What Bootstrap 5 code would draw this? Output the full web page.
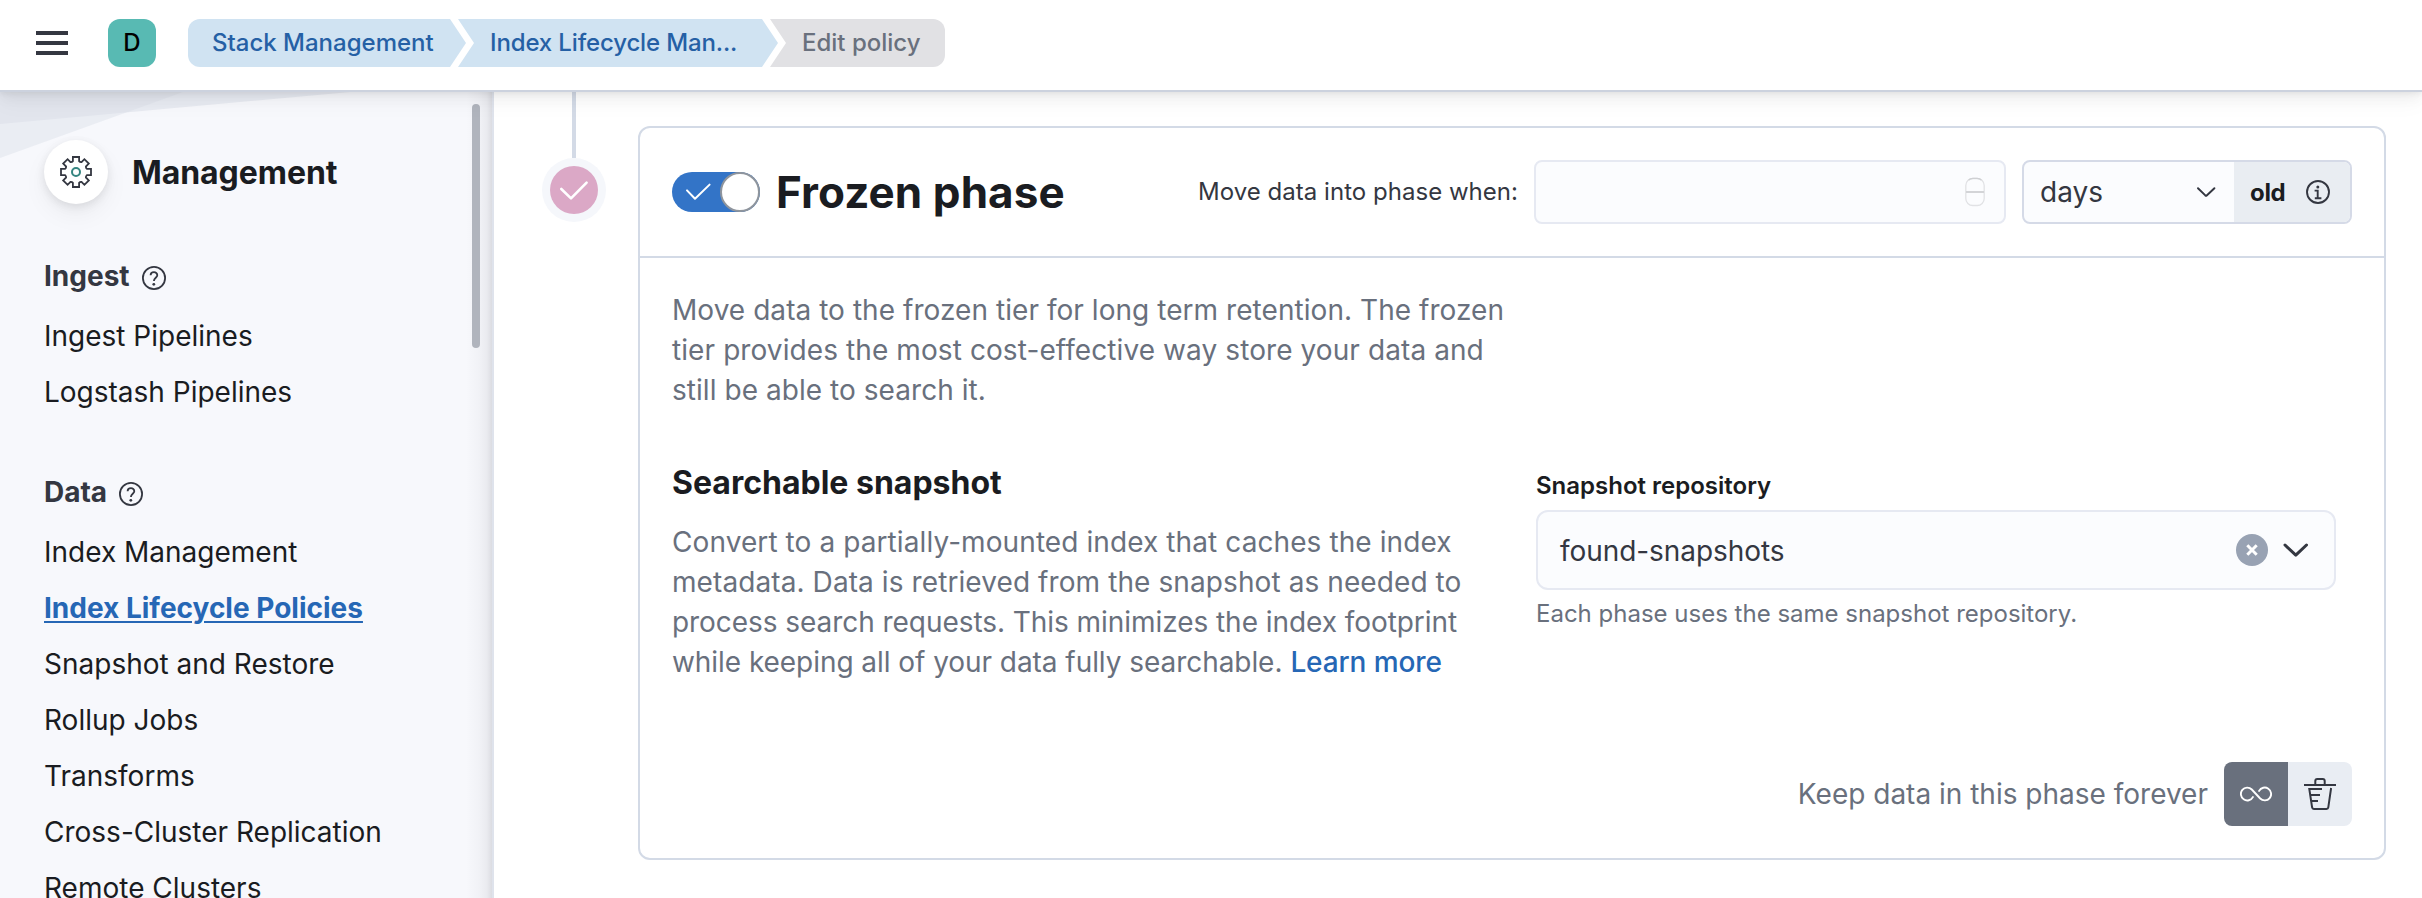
<!DOCTYPE html>
<html lang="en">
<head>
<meta charset="utf-8">
<title>Edit policy</title>
<link href="https://cdn.jsdelivr.net/npm/bootstrap@5.3.0/dist/css/bootstrap.min.css" rel="stylesheet">
<script src="https://cdn.jsdelivr.net/npm/bootstrap@5.3.0/dist/js/bootstrap.bundle.min.js"></script>
<style>
  :root { --ink: #1a1c21; --text: #343741; --subdued: #69707d; --line: #d3dae6; --link: #2667b5; --field: #fbfcfe; }
  html, body { height: 100%; }
  body { font-family: Inter, "Liberation Sans", sans-serif; font-size: 28px; line-height: 40px; color: var(--text); background: #fff; overflow: hidden; }
  svg { display: block; flex: none; }
  .raised { box-shadow: 0 1.8px 8px rgba(0,0,0,.05), 0 11px 24px rgba(0,0,0,.05), 0 4px 12px rgba(0,0,0,.05); }

  .topbar { height: 92px; padding: 0 0 4px 36px; border-bottom: 2px solid #ccd2de; z-index: 3; box-shadow: 0 2px 5px rgba(0,0,0,.05), 0 5px 14px rgba(0,0,0,.05), 0 11px 22px rgba(0,0,0,.035); }
  .space-avatar { width: 48px; height: 48px; margin: 0 32px 0 40px; border-radius: 12px; background: #58bab3; color: #000; font-size: 24px; font-weight: 500; }
  .crumb { height: 48px; padding-left: 24px; font-size: 24px; font-weight: 500; line-height: 47px; color: #2560a5; background: #d0e3f2; white-space: nowrap; text-decoration: none; }
  .crumb + .crumb { margin-left: -8px; padding-left: 32px; }
  .crumb-first { width: 278px; border-radius: 12px 0 0 12px; clip-path: polygon(0 0, 262px 0, 100% 50%, 262px 100%, 0 100%); }
  .crumb-mid { width: 320px; letter-spacing: -.14px; clip-path: polygon(0 0, 304px 0, 100% 50%, 304px 100%, 0 100%, 16px 50%); }
  .crumb-last { width: 175px; border-radius: 0 12px 12px 0; color: #69707d; background: #e1e1e4; clip-path: polygon(0 0, 100% 0, 100% 100%, 0 100%, 16px 50%); }

  .sidebar { width: 492px; background: #f7f8fc; }
  .sidebar-art { top: 0; left: 0; }
  .sidebar-shade { top: 0; right: 0; bottom: 0; width: 26px; background: linear-gradient(90deg, rgba(60,60,75,0), rgba(60,60,75,.03) 50%, rgba(60,60,75,.07) 80%, rgba(60,60,75,.15)); }
  .scroll-thumb { top: 12px; right: 12px; width: 8px; height: 244px; border-radius: 4px; background: #b0b4bd; }
  .sidebar-body { padding: 48px 0 0 44px; }
  .app-icon { width: 64px; height: 64px; background: #fff; }
  .sidebar-title { padding-top: 2px; font-size: 32px; font-weight: 700; color: var(--ink); letter-spacing: -.07px; }
  .nav-group { margin-top: 52px; }
  .nav-group h2 { margin: 0 0 12px; font-size: 28px; line-height: 40px; font-weight: 700; color: var(--text); gap: 12px; }
  .nav-group h2 svg { margin-top: 4px; }
  .nav-group .nav-link { padding: 0; line-height: 56px; height: 56px; color: var(--ink); white-space: nowrap; }
  .nav-group .nav-link.active { font-weight: 700; color: var(--link); text-decoration: underline; text-decoration-thickness: 2px; text-underline-offset: 3px; }

  .content-area { border-left: 2px solid #dfe3ec; background: #fff; padding-left: 48px; }
  .timeline { width: 64px; margin-right: 32px; }
  .timeline-line { width: 4px; height: 66px; background: var(--line); }
  .timeline-ring { width: 64px; height: 64px; background: #f5f7fb; }
  .timeline-dot { width: 48px; height: 48px; background: #dba8c6; }

  .phase { width: 1748px; height: 734px; margin-top: 34px; border: 2px solid var(--line); border-radius: 12px; }
  .phase-head { height: 130px; padding: 0 32px; border-bottom: 2px solid var(--line); }
  .switch { width: 88px; height: 40px; border-radius: 20px; background: #3374c7; padding-left: 12px; }
  .switch-thumb { width: 40px; height: 40px; border: 2px solid #8f959d; background: #fff; }
  .phase-title { font-size: 44px; line-height: 48px; font-weight: 700; color: var(--ink); margin: 0 0 0 16px; letter-spacing: .08px; }
  .age-label { font-size: 24px; margin-right: 16px; padding-bottom: 1px; letter-spacing: .03px; }
  .field { border: 2px solid #e6e9f2; background: var(--field); }
  .age-input { width: 472px; height: 64px; border-radius: 8px; padding-right: 19px; margin-right: 16px; }
  .age-unit { width: 330px; height: 64px; border: 2px solid #d5dae7; border-radius: 8px; background: var(--field); }
  .age-unit-value { padding: 0 18px 0 16px; }
  .age-append { width: 116px; background: #e9edf2; padding: 0 20px 0 16px; }
  .age-append b { font-size: 24px; color: var(--ink); padding-top: 2px; letter-spacing: -.3px; }
  .phase-body { padding: 32px; color: var(--subdued); }
  .prose { width: 848px; margin: 0; letter-spacing: .09px; }
  .prose .snug { letter-spacing: .05px; }
  .prose .tight { letter-spacing: -.055px; }
  .prose a { color: var(--link); font-weight: 500; text-decoration: none; letter-spacing: -.1px; }
  .settings { margin-top: 49px; }
  .section-title { font-size: 32px; line-height: 48px; font-weight: 700; color: var(--ink); margin: 0 0 15px; }
  .repo { width: 800px; margin: 9px 16px 0 0; font-size: 24px; }
  .repo label { line-height: 36px; font-weight: 600; color: var(--ink); }
  .combo { height: 80px; margin-top: 6px; padding: 0 23px 0 22px; border-radius: 12px; font-size: 28px; letter-spacing: -.06px; color: var(--text); }
  .combo-value { padding-top: 1px; }
  .combo-arrow { margin-left: 15px; }
  .help { line-height: 36px; margin-top: 6px; color: var(--subdued); }
  .btn-seg { width: 64px; height: 64px; background: #e9edf3; }
  .btn-seg.selected { background: #69707d; }
</style>
</head>
<body class="d-flex flex-column">

<header class="topbar d-flex align-items-center bg-white position-relative flex-shrink-0">
  <svg width="32" height="24" fill="#343741" aria-label="Menu"><path d="M0 0h32v4H0zM0 10h32v4H0zM0 20h32v4H0z"/></svg>
  <div class="space-avatar d-flex align-items-center justify-content-center">D</div>
  <nav class="d-flex" aria-label="Breadcrumb">
    <a class="crumb crumb-first" style="color:#2560a5" href="#">Stack Management</a>
    <a class="crumb crumb-mid" style="color:#2560a5" href="#">Index Lifecycle Man...</a>
    <span class="crumb crumb-last">Edit policy</span>
  </nav>
</header>

<div class="d-flex flex-grow-1 overflow-hidden">
  <aside class="sidebar position-relative flex-shrink-0 overflow-hidden">
    <svg class="sidebar-art position-absolute" width="492" height="80">
      <path d="M0 0H350L0 32Z" fill="#d9dde8" fill-opacity=".5"/>
      <path d="M0 0H183L0 66Z" fill="#d9dde8" fill-opacity=".42"/>
    </svg>
    <div class="sidebar-shade position-absolute"></div>
    <div class="scroll-thumb position-absolute"></div>

    <div class="sidebar-body position-relative">
      <div class="d-flex align-items-center">
        <div class="app-icon raised rounded-circle d-flex align-items-center justify-content-center">
          <svg width="32" height="32" viewBox="-16 -16 32 32" fill="none" stroke="#343741" stroke-width="1.8">
            <path d="M-3.1-10.9V-15H3.1V-10.9Q4-9.7 5.5-9.9L8.4-12.8 12.8-8.4 9.9-5.5Q9.7-4 10.9-3.1H15V3.1H10.9Q9.7 4 9.9 5.5L12.8 8.4 8.4 12.8 5.5 9.9Q4 9.7 3.1 10.9V15H-3.1V10.9Q-4 9.7-5.5 9.9L-8.4 12.8-12.8 8.4-9.9 5.5Q-9.7 4-10.9 3.1H-15V-3.1H-10.9Q-9.7-4-9.9-5.5L-12.8-8.4-8.4-12.8-5.5-9.9Q-4-9.7-3.1-10.9Z"/>
            <circle r="4" stroke="#358581" stroke-width="2"/>
          </svg>
        </div>
        <div class="sidebar-title ms-4">Management</div>
      </div>

      <section class="nav-group">
        <h2 class="d-flex align-items-center">Ingest
          <svg width="24" height="24" fill="none" stroke="#343741" stroke-width="1.8"><circle cx="12" cy="12" r="11.1"/><path d="M8.6 9.3C8.6 5.2 15.3 5.2 15.3 9.2 15.3 11.7 11.9 11.9 11.9 15"/><circle cx="11.8" cy="18.3" r="1.4" fill="#343741" stroke="none"/></svg>
        </h2>
        <nav class="nav flex-column">
          <a class="nav-link" href="#">Ingest Pipelines</a>
          <a class="nav-link" href="#">Logstash Pipelines</a>
        </nav>
      </section>

      <section class="nav-group">
        <h2 class="d-flex align-items-center">Data
          <svg width="24" height="24" fill="none" stroke="#343741" stroke-width="1.8"><circle cx="12" cy="12" r="11.1"/><path d="M8.6 9.3C8.6 5.2 15.3 5.2 15.3 9.2 15.3 11.7 11.9 11.9 11.9 15"/><circle cx="11.8" cy="18.3" r="1.4" fill="#343741" stroke="none"/></svg>
        </h2>
        <nav class="nav flex-column">
          <a class="nav-link" href="#">Index Management</a>
          <a class="nav-link active" href="#">Index Lifecycle Policies</a>
          <a class="nav-link" href="#">Snapshot and Restore</a>
          <a class="nav-link" href="#">Rollup Jobs</a>
          <a class="nav-link" href="#">Transforms</a>
          <a class="nav-link" href="#">Cross-Cluster Replication</a>
          <a class="nav-link" href="#">Remote Clusters</a>
        </nav>
      </section>
    </div>
  </aside>

  <main class="content-area d-flex flex-grow-1 align-items-start">
    <div class="timeline d-flex flex-column align-items-center flex-shrink-0">
      <div class="timeline-line"></div>
      <div class="timeline-ring rounded-circle d-flex align-items-center justify-content-center">
        <div class="timeline-dot rounded-circle d-flex align-items-center justify-content-center">
          <svg width="32" height="32" fill="none" stroke="#fff" stroke-width="2.6" stroke-linecap="round" stroke-linejoin="round"><path d="M3.3 15L13 24.4 28.6 8.6"/></svg>
        </div>
      </div>
    </div>

    <section class="phase flex-shrink-0 d-flex flex-column">
      <div class="phase-head d-flex align-items-center flex-shrink-0">
        <div class="switch d-flex align-items-center justify-content-between" role="switch" aria-checked="true">
          <svg width="28" height="24" fill="none" stroke="#fff" stroke-width="2" stroke-linecap="round" stroke-linejoin="round"><path d="M3 10.400L11 18.800 25.600 4.600"/></svg>
          <div class="switch-thumb rounded-circle"></div>
        </div>
        <h1 class="phase-title">Frozen phase</h1>
        <div class="d-flex align-items-center ms-auto">
          <span class="age-label">Move data into phase when:</span>
          <div class="age-input field d-flex align-items-center justify-content-end">
            <svg width="20" height="30" fill="none"><rect x="0.8" y="1.5" width="18.4" height="27" rx="7" stroke="#e1e2e5" stroke-width="1.3"/><path d="M3.6 3.2Q5 1.4 8 1.4h4q3 0 4.4 1.8" stroke="#cfd0d3" stroke-width="1.3"/><path d="M1 15h18" stroke="#d3d4d7" stroke-width="2"/></svg>
          </div>
          <div class="age-unit d-flex overflow-hidden">
            <div class="age-unit-value d-flex flex-grow-1 align-items-center justify-content-between">days
              <svg width="20" height="12" fill="none" stroke="#343741" stroke-width="2" stroke-linecap="round" stroke-linejoin="round"><path d="M2 2.3L9.3 9.4Q10 10 10.700 9.400L18.400 2.300"/></svg>
            </div>
            <div class="age-append d-flex align-items-center justify-content-between"><b>old</b>
              <svg width="24" height="24" fill="none" stroke="#343741" stroke-width="1.9"><circle cx="12" cy="12" r="11"/><path d="M8.6 10.6H11.7V18.2M8.8 18.2H15.4"/><circle cx="11.8" cy="6.9" r="1.5" fill="#343741" stroke="none"/></svg>
            </div>
          </div>
        </div>
      </div>

      <div class="phase-body d-flex flex-column flex-grow-1">
        <p class="prose"><span class="snug">Move data to the frozen tier for long term retention. The frozen</span><br>tier provides the most cost-effective way store your data and<br><span class="snug">still be able to search it.</span></p>
        <div class="settings d-flex justify-content-between">
          <div>
            <h2 class="section-title">Searchable snapshot</h2>
            <p class="prose">Convert to a partially-mounted index that caches the index<br>metadata. Data is retrieved from the snapshot as needed to<br><span class="tight">process search requests. This minimizes the index footprint</span><br><span class="tight">while keeping all of your data fully searchable.</span> <a href="#">Learn more</a></p>
          </div>
          <div class="repo">
            <label class="d-block">Snapshot repository</label>
            <div class="combo field d-flex align-items-center">
              <span class="combo-value me-auto">found-snapshots</span>
              <svg width="32" height="32"><circle cx="16" cy="16" r="16" fill="#98a2b3"/><path d="M11.3 11.3l9.4 9.4M20.7 11.3l-9.4 9.4" stroke="#fff" stroke-width="3"/></svg>
              <svg class="combo-arrow" width="28" height="16" fill="none" stroke="#343741" stroke-width="3" stroke-linecap="round" stroke-linejoin="round"><path d="M2 3L12.8 13.2 23.5 3"/></svg>
            </div>
            <div class="help">Each phase uses the same snapshot repository.</div>
          </div>
        </div>
        <div class="d-flex align-items-center justify-content-end mt-auto">
          <span class="me-3">Keep data in this phase forever</span>
          <div class="d-flex rounded-3 overflow-hidden">
            <div class="btn-seg selected d-flex align-items-center justify-content-center">
              <svg width="32" height="32" fill="none" stroke="#fff" stroke-width="1.9" stroke-linecap="round"><path d="M12.9 19.1A6.4 6.4 0 1 1 11.8 11.5L20.2 20.5A6.4 6.4 0 1 0 19.1 12.9"/></svg>
            </div>
            <div class="btn-seg d-flex align-items-center justify-content-center">
              <svg width="32" height="32" fill="none" stroke="#343741" stroke-width="2"><path d="M0 7H32M11.3 7V3a2 2 0 0 1 2-2h5.4a2 2 0 0 1 2 2V7M18 11H5.3L8.1 29.4a1.9 1.9 0 0 0 1.900 1.600H22.400a1.900 1.900 0 0 0 1.900-1.600L27.100 10M6.200 17H16M7.200 23H14"/></svg>
            </div>
          </div>
        </div>
      </div>
    </section>
  </main>
</div>
</body>
</html>
